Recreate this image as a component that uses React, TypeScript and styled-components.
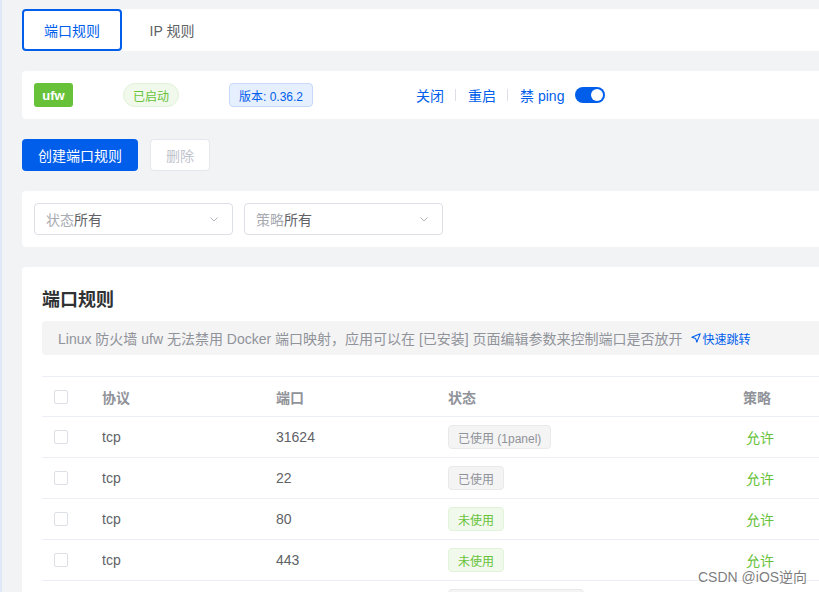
import styled, { createGlobalStyle } from "styled-components";

const GlobalStyle = createGlobalStyle`
  html, body {
    margin: 0;
    padding: 0;
    overflow: hidden;
    background: #f2f3f5;
  }
  body {
    font-family: "Liberation Sans", "Noto Sans CJK SC", sans-serif;
    font-size: 14px;
    color: #606266;
  }
`;

const rules = [
  { proto: "tcp", port: "31624", status: "已使用 (1panel)", used: true },
  { proto: "tcp", port: "22", status: "已使用", used: true },
  { proto: "tcp", port: "80", status: "未使用", used: false },
  { proto: "tcp", port: "443", status: "未使用", used: false },
  { proto: "tcp", port: "3306", status: "已使用 (mysql-server)", used: true },
];

const App = () => {
  return (
    <>
      <GlobalStyle />
      <Layout>
        <SideEdge />
        <Main>
          <TabCard>
            <Tab active>端口规则</Tab>
            <Tab>IP 规则</Tab>
          </TabCard>

          <StatusCard>
            <AppTag>ufw</AppTag>
            <Tag kind="success" round>
              已启动
            </Tag>
            <Tag kind="primary">版本: 0.36.2</Tag>
            <Actions>
              <LinkText>关闭</LinkText>
              <Divider />
              <LinkText>重启</LinkText>
              <Divider />
              <LinkText>禁 ping</LinkText>
              <Switch>
                <Knob />
              </Switch>
            </Actions>
          </StatusCard>

          <ButtonRow>
            <PrimaryButton>创建端口规则</PrimaryButton>
            <PlainButton disabled>删除</PlainButton>
          </ButtonRow>

          <FilterCard>
            <Select>
              <span>
                <Placeholder>状态</Placeholder>所有
              </span>
              <Chevron />
            </Select>
            <Select>
              <span>
                <Placeholder>策略</Placeholder>所有
              </span>
              <Chevron />
            </Select>
          </FilterCard>

          <TableCard>
            <Title>端口规则</Title>
            <Alert>
              Linux 防火墙 ufw 无法禁用 Docker 端口映射，应用可以在 [已安装]
              页面编辑参数来控制端口是否放开
              <JumpLink>
                <svg width="10" height="10" viewBox="0 0 24 24" fill="none">
                  <path
                    d="M22 2 2 10l9 3 3 9 8-20Z"
                    stroke="currentColor"
                    strokeWidth="2.6"
                    strokeLinejoin="round"
                  />
                </svg>
                快速跳转
              </JumpLink>
            </Alert>
            <Table>
              <HeadRow>
                <Cell>
                  <Checkbox />
                </Cell>
                <Cell>协议</Cell>
                <Cell>端口</Cell>
                <Cell>状态</Cell>
                <Cell>策略</Cell>
              </HeadRow>
              {rules.map((r, i) => (
                <BodyRow key={i}>
                  <Cell>
                    <Checkbox />
                  </Cell>
                  <Cell>{r.proto}</Cell>
                  <Cell>{r.port}</Cell>
                  <Cell>
                    <Tag kind={r.used ? "info" : "success"}>{r.status}</Tag>
                  </Cell>
                  <Cell>
                    <Allow>允许</Allow>
                  </Cell>
                </BodyRow>
              ))}
            </Table>
          </TableCard>
        </Main>
        <Watermark>CSDN @iOS逆向</Watermark>
      </Layout>
    </>
  );
};

export default App;

const Layout = styled.div`
  display: flex;
  align-items: flex-start;
  height: 592px;
  position: relative;
  overflow: hidden;
`;

const SideEdge = styled.div`
  width: 2px;
  height: 592px;
  flex-shrink: 0;
  background: #dfe8f7;
`;

const Main = styled.div`
  width: 1200px;
  flex-shrink: 0;
  padding: 9px 0 0 20px;
  display: flex;
  flex-direction: column;
  gap: 20px;

  & > * {
    flex-shrink: 0;
  }
`;

const Card = styled.div`
  background: #fff;
  border-radius: 4px;
`;

const TabCard = styled(Card)`
  display: flex;
  height: 42px;
`;

const Tab = styled.div<{ active?: boolean }>`
  width: 100px;
  box-sizing: border-box;
  display: flex;
  align-items: center;
  justify-content: center;
  border-radius: 4px;
  font-size: 14px;
  color: ${(p) => (p.active ? "#005eeb" : "#606266")};
  border: 2px solid ${(p) => (p.active ? "#005eeb" : "transparent")};
`;

const StatusCard = styled(Card)`
  height: 48px;
  display: flex;
  align-items: center;
  padding-left: 12px;
  gap: 50px;
`;

const AppTag = styled.span`
  display: inline-flex;
  align-items: center;
  justify-content: center;
  width: 39px;
  height: 24px;
  border-radius: 3px;
  background: #67c23a;
  color: #fff;
  font-weight: bold;
  font-size: 13px;
`;

const tagColors = {
  success: { bg: "#f0f9eb", border: "#e1f3d8", text: "#67c23a" },
  primary: { bg: "#e6effd", border: "#c7dafa", text: "#005eeb" },
  info: { bg: "#f4f4f5", border: "#e9e9eb", text: "#909399" },
};

const Tag = styled.span<{ kind: keyof typeof tagColors; round?: boolean }>`
  display: inline-flex;
  align-items: center;
  box-sizing: border-box;
  height: 24px;
  padding: 0 9px;
  font-size: 12px;
  white-space: nowrap;
  border-radius: ${(p) => (p.round ? "12px" : "4px")};
  background: ${(p) => tagColors[p.kind].bg};
  border: 1px solid ${(p) => tagColors[p.kind].border};
  color: ${(p) => tagColors[p.kind].text};
`;

const Actions = styled.div`
  display: flex;
  align-items: center;
  margin-left: 53px;
`;

const LinkText = styled.span`
  color: #005eeb;
  font-size: 14px;
`;

const Divider = styled.span`
  width: 1px;
  height: 12px;
  background: #dcdfe6;
  margin: 0 12px 0 11px;
`;

const Switch = styled.span`
  display: inline-flex;
  align-items: center;
  justify-content: flex-end;
  box-sizing: border-box;
  width: 30px;
  height: 16px;
  margin-left: 11px;
  padding: 0 2px;
  border-radius: 8px;
  background: #005eeb;
`;

const Knob = styled.span`
  width: 12px;
  height: 12px;
  border-radius: 50%;
  background: #fff;
`;

const ButtonRow = styled.div`
  display: flex;
  gap: 12px;
`;

const PrimaryButton = styled.button`
  height: 32px;
  padding: 0 16px;
  border: none;
  border-radius: 4px;
  background: #005eeb;
  color: #fff;
  font-family: inherit;
  font-size: 14px;
`;

const PlainButton = styled.button`
  height: 32px;
  width: 60px;
  border: 1px solid #e4e7ed;
  border-radius: 4px;
  background: #fff;
  color: #c0c4cc;
  font-family: inherit;
  font-size: 14px;
`;

const FilterCard = styled(Card)`
  display: flex;
  gap: 11px;
  padding: 12px;
`;

const Select = styled.div`
  width: 199px;
  height: 32px;
  box-sizing: border-box;
  border: 1px solid #dcdfe6;
  border-radius: 4px;
  padding: 0 12px 0 11px;
  display: flex;
  align-items: center;
  justify-content: space-between;
  color: #606266;
`;

const Placeholder = styled.span`
  color: #a8abb2;
`;

const Chevron = () => (
  <svg width="12" height="12" viewBox="0 0 24 24" fill="none">
    <path d="m5 9 7 7 7-7" stroke="#a8abb2" strokeWidth="1.8" />
  </svg>
);

const TableCard = styled(Card)`
  padding: 20px 20px 40px;
`;

const Title = styled.div`
  font-size: 18px;
  line-height: 26px;
  font-weight: bold;
  color: #303133;
  margin-bottom: 8px;
`;

const Alert = styled.div`
  height: 34px;
  box-sizing: border-box;
  background: #f4f4f5;
  border-radius: 4px;
  padding: 0 16px;
  display: flex;
  align-items: center;
  color: #909399;
  font-size: 14px;
  white-space: nowrap;
`;

const JumpLink = styled.span`
  display: inline-flex;
  align-items: center;
  gap: 2px;
  margin-left: 8px;
  color: #005eeb;
  font-size: 12px;
`;

const Table = styled.div`
  margin-top: 21px;
  border-top: 1px solid #ebeef5;
`;

const Row = styled.div`
  display: grid;
  grid-template-columns: 48px 174px 172px 295px 1fr;
  height: 40px;
  align-items: center;
  border-bottom: 1px solid #ebeef5;
`;

const HeadRow = styled(Row)`
  height: 39px;
  color: #909399;
  font-weight: bold;
`;

const BodyRow = styled(Row)`
  color: #606266;
`;

const Cell = styled.div`
  padding: 0 12px;
  display: flex;
  align-items: center;
`;

const Checkbox = styled.span`
  width: 14px;
  height: 14px;
  box-sizing: border-box;
  border: 1px solid #dcdfe6;
  border-radius: 2px;
  background: #fff;
`;

const Allow = styled.span`
  color: #67c23a;
  padding-left: 3px;
`;

const Watermark = styled.div`
  position: absolute;
  left: 698px;
  top: 566px;
  font-size: 14px;
  color: rgba(80, 80, 80, 0.75);
  text-shadow: 0 0 2px #fff;
`;
